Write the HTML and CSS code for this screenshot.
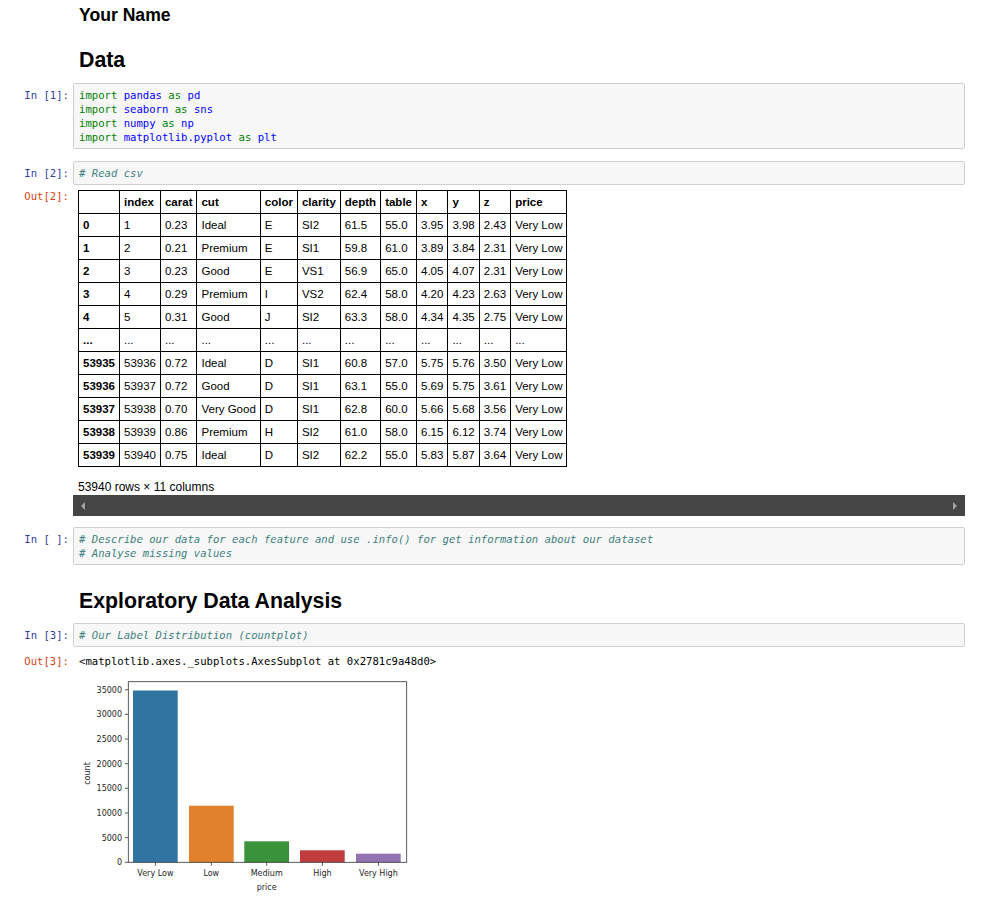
FILE: index.html
```html
<!DOCTYPE html>
<html>
<head>
<meta charset="utf-8">
<title>Notebook</title>
<link rel="stylesheet" href="styles.css">
</head>
<body>
<div class="nb">
  <div class="row md first">
    <div class="prompt"></div>
    <div class="md-body"><h3>Your Name</h3></div>
  </div>
  <div class="row md">
    <div class="prompt"></div>
    <div class="md-body"><h2 class="h-data">Data</h2></div>
  </div>

  <div class="row cell c1">
    <div class="prompt in">In [1]:</div>
    <div class="input"><span class="kw">import</span> <span class="nm">pandas</span> <span class="kw">as</span> <span class="nm">pd</span>
<span class="kw">import</span> <span class="nm">seaborn</span> <span class="kw">as</span> <span class="nm">sns</span>
<span class="kw">import</span> <span class="nm">numpy</span> <span class="kw">as</span> <span class="nm">np</span>
<span class="kw">import</span> <span class="nm">matplotlib.pyplot</span> <span class="kw">as</span> <span class="nm">plt</span></div>
  </div>

  <div class="row cell c2">
    <div class="prompt in">In [2]:</div>
    <div class="input"><span class="cm"># Read csv</span></div>
  </div>
  <div class="row out-row o2">
    <div class="prompt out">Out[2]:</div>
    <div class="out-area">
      <table class="df">
        <thead>
          <tr><th></th><th>index</th><th>carat</th><th>cut</th><th>color</th><th>clarity</th><th>depth</th><th>table</th><th>x</th><th>y</th><th>z</th><th>price</th></tr>
        </thead>
        <tbody>
          <tr><th>0</th><td>1</td><td>0.23</td><td>Ideal</td><td>E</td><td>SI2</td><td>61.5</td><td>55.0</td><td>3.95</td><td>3.98</td><td>2.43</td><td>Very Low</td></tr>
          <tr><th>1</th><td>2</td><td>0.21</td><td>Premium</td><td>E</td><td>SI1</td><td>59.8</td><td>61.0</td><td>3.89</td><td>3.84</td><td>2.31</td><td>Very Low</td></tr>
          <tr><th>2</th><td>3</td><td>0.23</td><td>Good</td><td>E</td><td>VS1</td><td>56.9</td><td>65.0</td><td>4.05</td><td>4.07</td><td>2.31</td><td>Very Low</td></tr>
          <tr><th>3</th><td>4</td><td>0.29</td><td>Premium</td><td>I</td><td>VS2</td><td>62.4</td><td>58.0</td><td>4.20</td><td>4.23</td><td>2.63</td><td>Very Low</td></tr>
          <tr><th>4</th><td>5</td><td>0.31</td><td>Good</td><td>J</td><td>SI2</td><td>63.3</td><td>58.0</td><td>4.34</td><td>4.35</td><td>2.75</td><td>Very Low</td></tr>
          <tr><th>...</th><td>...</td><td>...</td><td>...</td><td>...</td><td>...</td><td>...</td><td>...</td><td>...</td><td>...</td><td>...</td><td>...</td></tr>
          <tr><th>53935</th><td>53936</td><td>0.72</td><td>Ideal</td><td>D</td><td>SI1</td><td>60.8</td><td>57.0</td><td>5.75</td><td>5.76</td><td>3.50</td><td>Very Low</td></tr>
          <tr><th>53936</th><td>53937</td><td>0.72</td><td>Good</td><td>D</td><td>SI1</td><td>63.1</td><td>55.0</td><td>5.69</td><td>5.75</td><td>3.61</td><td>Very Low</td></tr>
          <tr><th>53937</th><td>53938</td><td>0.70</td><td>Very Good</td><td>D</td><td>SI1</td><td>62.8</td><td>60.0</td><td>5.66</td><td>5.68</td><td>3.56</td><td>Very Low</td></tr>
          <tr><th>53938</th><td>53939</td><td>0.86</td><td>Premium</td><td>H</td><td>SI2</td><td>61.0</td><td>58.0</td><td>6.15</td><td>6.12</td><td>3.74</td><td>Very Low</td></tr>
          <tr><th>53939</th><td>53940</td><td>0.75</td><td>Ideal</td><td>D</td><td>SI2</td><td>62.2</td><td>55.0</td><td>5.83</td><td>5.87</td><td>3.64</td><td>Very Low</td></tr>
        </tbody>
      </table>
      <p class="shape">53940 rows × 11 columns</p>
      <div class="hscroll"><span class="arr left"></span><span class="arr right"></span></div>
    </div>
  </div>

  <div class="row cell c3">
    <div class="prompt in">In [ ]:</div>
    <div class="input"><span class="cm"># Describe our data for each feature and use .info() for get information about our dataset</span>
<span class="cm"># Analyse missing values</span></div>
  </div>

  <div class="row md">
    <div class="prompt"></div>
    <div class="md-body"><h2 class="h-eda">Exploratory Data Analysis</h2></div>
  </div>

  <div class="row cell c4">
    <div class="prompt in">In [3]:</div>
    <div class="input"><span class="cm"># Our Label Distribution (countplot)</span></div>
  </div>
  <div class="row out-row o3">
    <div class="prompt out">Out[3]:</div>
    <div class="out-area">
      <div class="out-text">&lt;matplotlib.axes._subplots.AxesSubplot at 0x2781c9a48d0&gt;</div>
    </div>
  </div>
  <div class="row">
    <div class="prompt"></div>
    <div class="out-area">
      <svg class="chart" width="340" height="226" viewBox="0 0 340 226">
        <rect x="54" y="20.5" width="44.7" height="171.8" fill="#3274a1"/>
        <rect x="110" y="135.7" width="44.7" height="56.6" fill="#e1812c"/>
        <rect x="165.3" y="171.3" width="44.7" height="21" fill="#3a923a"/>
        <rect x="221" y="180.3" width="44.7" height="12" fill="#c03d3e"/>
        <rect x="277" y="183.7" width="44.7" height="8.6" fill="#9372b2"/>
        <rect x="49.3" y="11.7" width="278.4" height="180.6" fill="none" stroke="#333" stroke-width="0.8"/>
        <g stroke="#333" stroke-width="0.8">
          <line x1="45.8" y1="192.3" x2="49.3" y2="192.3"/>
          <line x1="45.8" y1="167.65" x2="49.3" y2="167.65"/>
          <line x1="45.8" y1="143" x2="49.3" y2="143"/>
          <line x1="45.8" y1="118.35" x2="49.3" y2="118.35"/>
          <line x1="45.8" y1="93.7" x2="49.3" y2="93.7"/>
          <line x1="45.8" y1="69.05" x2="49.3" y2="69.05"/>
          <line x1="45.8" y1="44.4" x2="49.3" y2="44.4"/>
          <line x1="45.8" y1="19.75" x2="49.3" y2="19.75"/>
          <line x1="76.4" y1="192.3" x2="76.4" y2="195.8"/>
          <line x1="132.3" y1="192.3" x2="132.3" y2="195.8"/>
          <line x1="187.7" y1="192.3" x2="187.7" y2="195.8"/>
          <line x1="243.4" y1="192.3" x2="243.4" y2="195.8"/>
          <line x1="299.4" y1="192.3" x2="299.4" y2="195.8"/>
        </g>
        <g class="ytl">
          <text x="43" y="195.2">0</text>
          <text x="43" y="170.55">5000</text>
          <text x="43" y="145.9">10000</text>
          <text x="43" y="121.25">15000</text>
          <text x="43" y="96.6">20000</text>
          <text x="43" y="71.95">25000</text>
          <text x="43" y="47.3">30000</text>
          <text x="43" y="22.65">35000</text>
        </g>
        <g class="xtl">
          <text x="76.4" y="205.5">Very Low</text>
          <text x="132.3" y="205.5">Low</text>
          <text x="187.7" y="205.5">Medium</text>
          <text x="243.4" y="205.5">High</text>
          <text x="299.4" y="205.5">Very High</text>
          <text x="187.7" y="219.5">price</text>
        </g>
        <text class="ylab" x="10.5" y="103.5" transform="rotate(-90 10.5 103.5)">count</text>
      </svg>
    </div>
  </div>
</div>
</body>
</html>
```

FILE: styles.css
```css
html, body {
  margin: 0;
  padding: 0;
  background: #ffffff;
}

body {
  font-family: "Liberation Sans", Arial, sans-serif;
  color: #000000;
}

.nb {
  width: 965px;
}

.row {
  display: flex;
  align-items: flex-start;
}

.prompt {
  width: 73px;
  flex: none;
  box-sizing: border-box;
  padding-right: 4px;
  text-align: right;
  font-family: "DejaVu Sans Mono", monospace;
  font-size: 10.6px;
  line-height: 14px;
  white-space: pre;
}

.prompt.in {
  color: #303F9F;
  padding-top: 5px;
}

.prompt.out {
  color: #D84315;
}

.input {
  flex: 1;
  min-width: 0;
  background: #f7f7f7;
  border: 1px solid #cfcfcf;
  border-radius: 2px;
  padding: 4px 5px;
  font-family: "DejaVu Sans Mono", monospace;
  font-size: 10.6px;
  line-height: 14px;
  white-space: pre;
  color: #000;
}

.kw {
  color: #008000;
}

.nm {
  color: #0000ff;
}

.cm {
  color: #408080;
  font-style: italic;
}

.md-body {
  flex: 1;
  padding-left: 6px;
}

.md-body h3 {
  margin: 5px 0 0;
  font-size: 17.6px;
  line-height: 21px;
  font-weight: bold;
}

.md-body h2 {
  margin: 0;
  font-size: 21.3px;
  line-height: 26px;
  font-weight: bold;
}

.h-data {
  padding-top: 21px;
}

.h-eda {
  padding-top: 23px;
}

.c1 { margin-top: 10px; }
.c2 { margin-top: 12px; }
.c3 { margin-top: 11px; }
.c4 { margin-top: 9px; }

.o2 { margin-top: 4px; }
.o3 { margin-top: 7px; }

.out-area {
  flex: 1;
  min-width: 0;
}

.df {
  margin-left: 5px;
  margin-top: 1px;
  border-collapse: collapse;
  font-size: 11.5px;
  line-height: 14px;
}

.df th, .df td {
  border: 1px solid #000;
  padding: 4px 4px;
  text-align: left;
  white-space: nowrap;
}

.df th {
  font-weight: bold;
}

.shape {
  margin: 13px 0 0 5px;
  font-size: 12px;
  line-height: 14px;
}

.hscroll {
  margin-top: 1px;
  height: 21px;
  background: #454545;
  display: flex;
  align-items: center;
  justify-content: space-between;
  padding: 0 8px;
}

.arr {
  width: 0;
  height: 0;
  border-top: 4px solid transparent;
  border-bottom: 4px solid transparent;
}

.arr.left {
  border-right: 4px solid #a3a3a3;
}

.arr.right {
  border-left: 4px solid #a3a3a3;
}

.out-text {
  padding-left: 6px;
  font-family: "DejaVu Sans Mono", monospace;
  font-size: 10.6px;
  line-height: 14px;
  white-space: pre;
}

.chart {
  display: block;
  margin: 2px 0 0 6px;
  font-family: "DejaVu Sans", sans-serif;
}

.ytl text {
  font-size: 8px;
  fill: #262626;
  text-anchor: end;
}

.xtl text {
  font-size: 8px;
  fill: #262626;
  text-anchor: middle;
}

.ylab {
  font-size: 8px;
  fill: #262626;
  text-anchor: middle;
}
```
